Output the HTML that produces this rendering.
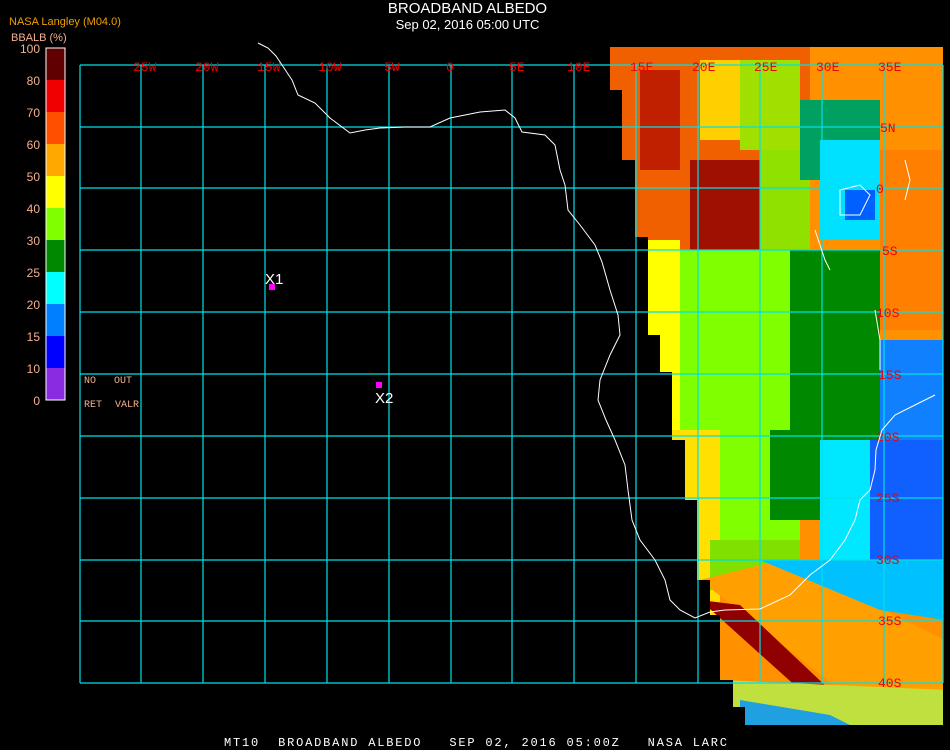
<!DOCTYPE html>
<html><head><style>
html,body{margin:0;padding:0;background:#000;width:950px;height:750px;overflow:hidden;font-family:"Liberation Sans",sans-serif}
.t{position:absolute;white-space:nowrap}
</style></head><body>
<div class="t" style="left:0;width:935px;text-align:center;top:0;color:#fff;font-size:15px">BROADBAND ALBEDO</div>
<div class="t" style="left:0;width:935px;text-align:center;top:17px;color:#fff;font-size:13px">Sep 02, 2016 05:00 UTC</div>
<div class="t" style="left:9px;top:16px;color:#f0a000;font-size:11px">NASA Langley (M04.0)</div>
<div class="t" style="left:11px;top:32px;color:#f5b090;font-size:11px">BBALB (%)</div>
<svg width="950" height="750" style="position:absolute;left:0;top:0">
<g font-family="Liberation Sans" font-size="12" fill="#f5b090" text-anchor="end">
<text x="40" y="53">100</text><text x="40" y="85">80</text><text x="40" y="117">70</text><text x="40" y="149">60</text><text x="40" y="181">50</text><text x="40" y="213">40</text><text x="40" y="245">30</text><text x="40" y="277">25</text><text x="40" y="309">20</text><text x="40" y="341">15</text><text x="40" y="373">10</text><text x="40" y="405">0</text>
</g>
<g>
<rect x="46" y="48" width="19" height="32" fill="#600000"/><rect x="46" y="80" width="19" height="32" fill="#f00000"/><rect x="46" y="112" width="19" height="32" fill="#ff5000"/><rect x="46" y="144" width="19" height="32" fill="#ffa800"/><rect x="46" y="176" width="19" height="32" fill="#ffff00"/><rect x="46" y="208" width="19" height="32" fill="#80ff00"/><rect x="46" y="240" width="19" height="32" fill="#008800"/><rect x="46" y="272" width="19" height="32" fill="#00ffff"/><rect x="46" y="304" width="19" height="32" fill="#0080ff"/><rect x="46" y="336" width="19" height="32" fill="#0000ff"/><rect x="46" y="368" width="19" height="32" fill="#8a2be2"/>
<rect x="46" y="48" width="19" height="352" fill="none" stroke="#fff" stroke-width="1"/>
</g>
<clipPath id="c"><polygon points="610,47 943,47 943,725 745,725 745,707 733,707 733,680 720,680 720,615 710,615 710,580 697,580 697,500 685,500 685,440 672,440 672,372 660,372 660,335 648,335 648,237 635,237 635,160 622,160 622,90 610,90"/></clipPath>
<g clip-path="url(#c)">
<rect x="600" y="40" width="350" height="720" fill="#ff9000"/>
<rect x="610" y="47" width="200" height="280" fill="#f06000"/>
<rect x="640" y="70" width="40" height="100" fill="#c02000"/>
<rect x="690" y="160" width="70" height="90" fill="#a01000"/>
<rect x="700" y="60" width="60" height="80" fill="#ffd000"/>
<rect x="740" y="60" width="60" height="90" fill="#a0e000"/>
<rect x="760" y="150" width="50" height="100" fill="#90e000"/>
<rect x="800" y="100" width="80" height="80" fill="#00a060"/>
<rect x="820" y="140" width="60" height="100" fill="#00e0ff"/>
<rect x="845" y="190" width="30" height="30" fill="#0060ff"/>
<rect x="880" y="150" width="65" height="180" fill="#ff8000"/>
<rect x="640" y="240" width="40" height="260" fill="#ffff00"/>
<rect x="680" y="250" width="110" height="180" fill="#80ff00"/>
<rect x="790" y="250" width="90" height="200" fill="#008800"/>
<rect x="880" y="340" width="65" height="110" fill="#1080ff"/>
<rect x="660" y="430" width="60" height="200" fill="#ffe000"/>
<rect x="720" y="430" width="80" height="110" fill="#80ff00"/>
<rect x="770" y="430" width="100" height="90" fill="#008800"/>
<rect x="820" y="440" width="60" height="120" fill="#00e8ff"/>
<rect x="870" y="440" width="75" height="130" fill="#1060ff"/>
<rect x="710" y="540" width="90" height="50" fill="#80e000"/>
<polygon points="700,580 780,560 945,640 945,700 840,690" fill="#ffa000"/>
<polygon points="700,600 740,605 830,690 800,690" fill="#900000"/>
<polygon points="760,560 945,560 945,620 880,610" fill="#00c0ff"/>
<polygon points="720,680 945,690 945,750 720,750" fill="#c0e040"/>
<polygon points="740,700 830,715 900,750 740,750" fill="#20a0e0"/>
</g>
<g stroke="#00e0e8" stroke-width="1.2" fill="none">
<path d="M80,65H943M80,127H943M80,188H943M80,250H943M80,312H943M80,374H943M80,436H943M80,498H943M80,560H943M80,621H943M80,683H943"/>
<path d="M80,65V683M141,65V683M203,65V683M265,65V683M327,65V683M389,65V683M451,65V683M512,65V683M574,65V683M636,65V683M698,65V683M760,65V683M822,65V683M884,65V683M943,65V683"/>
</g>
<g font-family="Liberation Mono" font-size="13" fill="#f00000">
<text x="133" y="71">25W</text><text x="195" y="71">20W</text><text x="257" y="71">15W</text><text x="318" y="71">10W</text><text x="384" y="71">5W</text><text x="446" y="71">0</text><text x="509" y="71">5E</text><text x="567" y="71">10E</text><text x="630" y="71">15E</text><text x="692" y="71">20E</text><text x="754" y="71">25E</text><text x="816" y="71">30E</text><text x="878" y="71">35E</text>
<text x="880" y="132">5N</text><text x="876" y="193">0</text><text x="882" y="255">5S</text><text x="876" y="317">10S</text><text x="878" y="379">15S</text><text x="876" y="441">20S</text><text x="876" y="502">25S</text><text x="876" y="564">30S</text><text x="878" y="625">35S</text><text x="878" y="687">40S</text>
</g>
<path d="M258,43 L268,48 L276,56 L284,68 L292,80 L298,95 L315,103 L330,118 L350,133 L365,130 L380,128 L405,127 L430,127 L450,118 L480,112 L505,110 L515,118 L522,132 L545,135 L555,145 L560,170 L565,185 L568,210 L580,225 L595,245 L602,262 L610,290 L618,315 L620,335 L610,355 L600,380 L598,400 L606,420 L615,440 L625,465 L628,490 L632,520 L640,540 L655,560 L665,580 L670,600 L680,610 L695,618 L710,612 L725,610 L760,609 L790,595 L810,575 L830,560 L845,540 L855,520 L860,500 L870,490 L875,470 L876,450 L882,430 L895,415 L915,405 L935,395" fill="none" stroke="#fff" stroke-width="1"/>
<path d="M905,160 L910,180 L905,200 M840,190 L860,185 L870,195 L860,215 L840,215 Z M815,230 L825,260 L830,270 M875,310 L880,340 L880,370" fill="none" stroke="#fff" stroke-width="1"/>
<rect x="269" y="284" width="6" height="6" fill="#ff00ff"/>
<rect x="376" y="382" width="6" height="6" fill="#ff00ff"/>
<g font-family="Liberation Sans" font-size="15" fill="#fff"><text x="265" y="284">X1</text><text x="375" y="403">X2</text></g>
<g font-family="Liberation Mono" font-size="10" fill="#f5b090"><text x="84" y="383">NO</text><text x="114" y="383">OUT</text><text x="84" y="407">RET</text><text x="115" y="407">VALR</text></g>
<text x="224" y="746" font-family="Liberation Mono" font-size="12" fill="#fff" style="white-space:pre" textLength="503" lengthAdjust="spacing">MT10  BROADBAND ALBEDO   SEP 02, 2016 05:00Z   NASA LARC</text>
</svg>
</body></html>
